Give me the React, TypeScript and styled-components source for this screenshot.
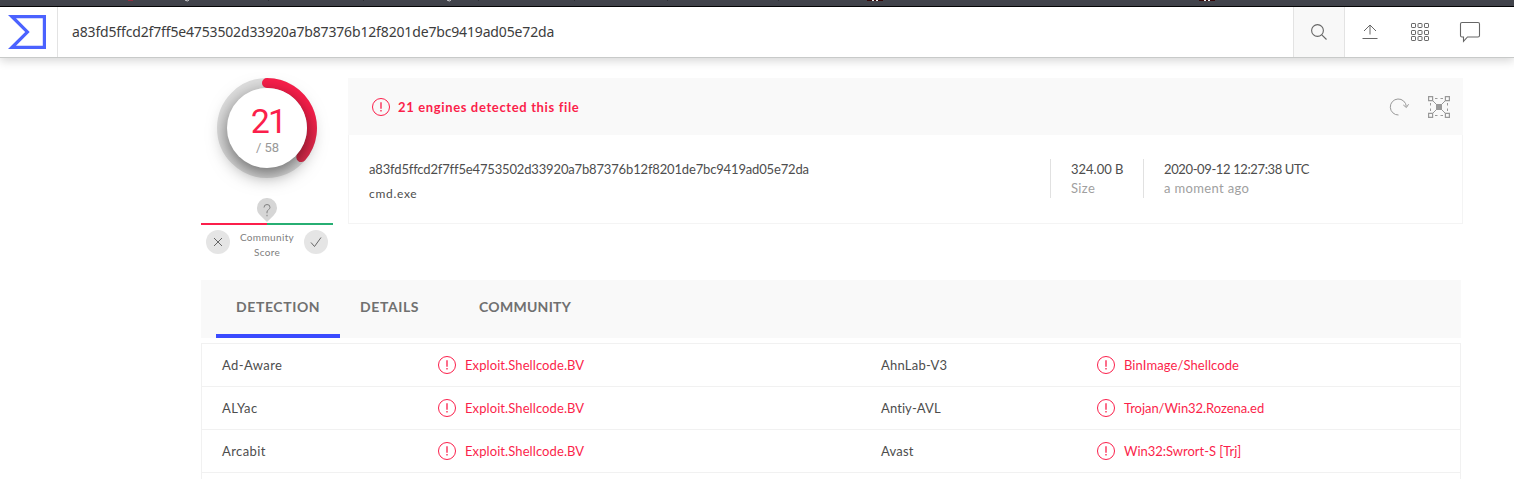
import React from "react";
import styled, { createGlobalStyle } from "styled-components";

const RED = "#fb1f4b";

const GlobalStyle = createGlobalStyle`
  * { box-sizing: border-box; }
  html, body { margin: 0; padding: 0; background: #fff; overflow: hidden; }
  body { font-family: Lato, "Open Sans", sans-serif; font-size: 13px; color: #4d4d4d; }
`;

const Page = styled.div`
  height: 479px;
  overflow: hidden;
  display: flex;
  flex-direction: column;
`;

const BrowserStrip = styled.div`
  height: 7px;
  flex: none;
  background: #42444c;
  border-bottom: 1px solid #050507;
  svg { display: block; }
`;

const Header = styled.header`
  height: 51px;
  flex: none;
  display: flex;
  background: #fff;
  border-bottom: 1px solid #c8cac9;
  box-shadow: 0 3px 9px rgba(0, 0, 0, 0.16);
`;

const LogoCell = styled.div`
  width: 58px;
  border-right: 1px solid #e3e3e3;
  padding: 8px 0 0 8px;
`;

const Query = styled.div`
  flex: 1;
  padding-left: 14px;
  font: 14px/50px "Noto Sans", sans-serif;
  letter-spacing: -0.155px;
  color: #3d3d3d;
`;

const HeaderButton = styled.div<{ $active?: boolean }>`
  width: ${(p) => (p.$active ? 52 : 50)}px;
  display: flex;
  align-items: center;
  justify-content: center;
  color: #666;
  ${(p) =>
    p.$active &&
    "background: #f8f8f8; border-left: 1px solid #e3e3e3; border-right: 1px solid #e3e3e3;"}
`;

const HeaderActions = styled.div`
  display: flex;
  width: 221px;
`;

const Main = styled.main`
  padding: 20px 51px 0 201px;
`;

const Summary = styled.section`
  display: flex;
  gap: 15px;
  height: 202px;
`;

const ScoreColumn = styled.div`
  width: 132px;
  display: flex;
  flex-direction: column;
  align-items: center;
`;

const Gauge = styled.div`
  width: 100px;
  height: 100px;
  padding: 10px;
  display: grid;
  border-radius: 50%;
  > * { grid-area: 1 / 1; }
  > svg { margin: -10px; }
`;

const GaugeDisc = styled.div`
  width: 80px;
  height: 80px;
  border-radius: 50%;
  background: #fff;
  box-shadow: 0 6px 19px rgba(0, 0, 0, 0.56);
  text-align: center;
  padding-top: 12px;
  font-family: Roboto, sans-serif;
`;

const Positives = styled.div`
  font-size: 34px;
  line-height: 43px;
  letter-spacing: -1.8px;
  padding-left: 2px;
  color: ${RED};
`;

const Total = styled.div`
  font-size: 13px;
  line-height: 10px;
  padding-left: 1px;
  color: #999;
`;

const Pin = styled.svg`
  display: block;
  margin-top: 20px;
`;

const ScoreLine = styled.div`
  width: 132px;
  height: 2px;
  background: linear-gradient(90deg, ${RED} 50%, #27ae73 50%);
`;

const Votes = styled.div`
  width: 132px;
  padding: 5px 5px 0;
  display: flex;
  justify-content: space-between;
`;

const VoteButton = styled.div`
  width: 24px;
  height: 24px;
  border-radius: 50%;
  background: #e5e5e5;
  svg { display: block; }
`;

const ScoreLabel = styled.div`
  font-size: 10px;
  line-height: 15px;
  letter-spacing: 0.35px;
  text-align: center;
  width: 60px;
  color: #808080;
`;

const Card = styled.div`
  width: 1115px;
  height: 146px;
  border: 1px solid #f4f4f4;
`;

const CardHeader = styled.div`
  margin: -1px -1px 0;
  height: 57px;
  padding: 0 13px 0 24px;
  display: flex;
  align-items: center;
  background: #f9f9f9;
  color: #999;
`;

const Verdict = styled.div`
  flex: 1;
  margin-left: 8px;
  font-size: 13px;
  font-weight: 700;
  letter-spacing: 0.64px;
  color: ${RED};
`;

const CardActions = styled.div`
  display: flex;
  gap: 19px;
  svg { display: block; }
`;

const CardBody = styled.div`
  display: flex;
  padding: 24px 20px 0;
  line-height: 19px;
`;

const FileInfo = styled.div`
  width: 681px;
  padding-top: 1px;
`;

const Hash = styled.div`
  letter-spacing: -0.155px;
`;

const FileName = styled.div`
  margin-top: 5px;
  font-size: 12px;
  letter-spacing: 0.7px;
`;

const Meta = styled.div<{ $width: number; $spacing: number }>`
  width: ${(p) => p.$width}px;
  height: 39px;
  padding: 1px 0 0 20px;
  border-left: 1px solid #e1e1e1;
  letter-spacing: ${(p) => p.$spacing}px;
  white-space: nowrap;
`;

const Muted = styled.div`
  color: #a0a0a0;
  letter-spacing: 0.35px;
`;

const Tabs = styled.nav`
  width: 1260px;
  height: 58px;
  padding-left: 15px;
  display: flex;
  background: #f9f9f9;
`;

const Tab = styled.div<{ $width: number; $spacing?: number; $active?: boolean }>`
  width: ${(p) => p.$width}px;
  padding: 0 20px;
  font-size: 14px;
  font-weight: 700;
  line-height: 54px;
  letter-spacing: ${(p) => p.$spacing ?? 0.6}px;
  color: #707070;
  border-bottom: 4px solid ${(p) => (p.$active ? "#3b4bff" : "transparent")};
`;

const Results = styled.div`
  width: 1260px;
  margin-top: 5px;
  border: 1px solid #f1f1f1;
`;

const ResultRow = styled.div`
  height: 43px;
  padding-left: 20px;
  display: grid;
  grid-template-columns: 216px 443px 216px 1fr;
  align-items: center;
  border-bottom: 1px solid #f1f1f1;
`;

const Engine = styled.div<{ $spacing: number }>`
  letter-spacing: ${(p) => p.$spacing}px;
`;

const Finding = styled.div<{ $spacing: number }>`
  display: flex;
  align-items: center;
  gap: 9px;
  color: ${RED};
  letter-spacing: ${(p) => p.$spacing}px;
`;

const AlertIcon = () => (
  <svg width="18" height="18" viewBox="0 0 18 18" fill="none" stroke={RED}>
    <circle cx="9" cy="9" r="8.5" />
    <path d="M9 4.2v6.6M9 12v1.500" strokeWidth="1.300" />
  </svg>
);

const HASH = "a83fd5ffcd2f7ff5e4753502d33920a7b87376b12f8201de7bc9419ad05e72da";

type Cell = { name: string; ns: number; result: string; rs: number };
const ROWS: [Cell, Cell][] = [
  [
    { name: "Ad-Aware", ns: 0.4, result: "Exploit.Shellcode.BV", rs: 0.09 },
    { name: "AhnLab-V3", ns: 0.22, result: "BinImage/Shellcode", rs: 0.09 },
  ],
  [
    { name: "ALYac", ns: 0.4, result: "Exploit.Shellcode.BV", rs: 0.09 },
    { name: "Antiy-AVL", ns: 0.1, result: "Trojan/Win32.Rozena.ed", rs: -0.05 },
  ],
  [
    { name: "Arcabit", ns: 0.4, result: "Exploit.Shellcode.BV", rs: 0.09 },
    { name: "Avast", ns: 0.2, result: "Win32:Swrort-S [Trj]", rs: -0.02 },
  ],
];

export default function App() {
  return (
    <Page>
      <GlobalStyle />
      <BrowserStrip>
        <svg width="1514" height="6">
          <path d="M128 0h5v.7h-5z" fill="#b3243c" />
          <path d="M185 0q2.500 2 4 0M447 0q2.500 2 4 0" fill="none" stroke="#d5d5d8" />
          <path d="M268 0h1v1h-1zM363 0h1v1h-1zM478 0h1v1h-1zM574 0h1v1h-1zM667 0h1v1h-1zM778 0h1v1h-1z" fill="#2c2e34" />
          <path d="M867 0h16v1h-16zM1199 0h16v1h-16z" fill="#350708" />
          <path d="M872 0h2v1h-2zM876 0h2v1h-2zM1204 0h2v1h-2zM1208 0h2v1h-2z" fill="#eee" />
        </svg>
      </BrowserStrip>
      <Header>
        <LogoCell>
          <svg width="38" height="34" viewBox="0 0 38 34">
            <path d="M0 0H38V34H0L17.200 17ZM8 3.200L21.700 17L8 30.800H34.800V3.200Z" fill="#4b62ff" fillRule="evenodd" />
          </svg>
        </LogoCell>
        <Query>{HASH}</Query>
        <HeaderActions>
          <HeaderButton $active>
            <svg width="18" height="18" viewBox="0 0 18 18" fill="none" stroke="currentColor" strokeWidth="1.100">
              <circle cx="7.500" cy="7.500" r="5.900" />
              <path d="M11.800 11.800L16.500 16.500" />
            </svg>
          </HeaderButton>
          <HeaderButton>
            <svg width="18" height="18" viewBox="0 0 18 18" fill="none" stroke="currentColor">
              <path d="M9 11.500V2.300M3 8L9 2L15 8M1.500 15.500H16.500" />
            </svg>
          </HeaderButton>
          <HeaderButton>
            <svg width="20" height="20" viewBox="0 0 20 20" fill="none" stroke="currentColor">
              {[1.5, 8.5, 14.5].map((y) =>
                [1.5, 8, 14.5].map((x) => (
                  <rect key={`${x}-${y}`} x={x} y={y} width="4" height="4" rx="0.600" />
                ))
              )}
            </svg>
          </HeaderButton>
          <HeaderButton>
            <svg width="22" height="22" viewBox="0 0 22 22" fill="none" stroke="currentColor" strokeWidth="1.100">
              <path d="M3 1.500H19Q20.500 1.500 20.500 3V14.500Q20.500 16 19 16H8.500L4.500 20.300V16H3Q1.500 16 1.500 14.500V3Q1.500 1.500 3 1.500Z" />
            </svg>
          </HeaderButton>
        </HeaderActions>
      </Header>

      <Main>
        <Summary>
          <ScoreColumn>
            <Gauge>
              <svg width="100" height="100" viewBox="0 0 100 100" fill="none" strokeWidth="10">
                <defs>
                  <linearGradient id="arc" gradientUnits="userSpaceOnUse" x1="0" y1="0" x2="0" y2="85">
                    <stop offset="0.4" stopColor={RED} />
                    <stop offset="1" stopColor="#e2304f" />
                  </linearGradient>
                </defs>
                <circle cx="50" cy="50" r="45" stroke="#e0e0e0" />
                <path d="M50 5A45 45 0 0 1 84.300 79.100" stroke="url(#arc)" strokeLinecap="round" />
              </svg>
              <GaugeDisc>
                <Positives>21</Positives>
                <Total>/ 58</Total>
              </GaugeDisc>
            </Gauge>
            <Pin width="20" height="25" viewBox="0 0 20 25">
              <path d="M10 24L3.400 17.500A10 10 0 1 1 16.600 17.500Z" fill="#d6d6d6" />
              <path d="M7 9.500Q7 6.500 10 6.500T13 9.300Q13 10.800 11.400 11.800Q10 12.700 10 14V15.300M10 16.800V18.300" fill="none" stroke="#808080" />
            </Pin>
            <ScoreLine />
            <Votes>
              <VoteButton>
                <svg width="24" height="24" viewBox="0 0 24 24" fill="none" stroke="#666">
                  <path d="M8 8L16 16M16 8L8 16" />
                </svg>
              </VoteButton>
              <ScoreLabel>Community Score</ScoreLabel>
              <VoteButton>
                <svg width="24" height="24" viewBox="0 0 24 24" fill="none" stroke="#666">
                  <path d="M7 12.500L10.500 16.500L17 7.500" />
                </svg>
              </VoteButton>
            </Votes>
          </ScoreColumn>

          <Card>
            <CardHeader>
              <AlertIcon />
              <Verdict>21 engines detected this file</Verdict>
              <CardActions>
                <svg width="20" height="22" viewBox="0 0 20 22" fill="none" stroke="currentColor">
                  <path d="M9.500 19A8 8 0 1 1 17.300 10.500M14.300 9L17.400 11.500L19.600 8.200" />
                </svg>
                <svg width="22" height="22" viewBox="0 0 22 22" fill="none" stroke="currentColor">
                  <path d="M.6 .6h4v4h-4zM17.400 .6h4v4h-4zM.6 17.400h4v4h-4zM17.400 17.400h4v4h-4z" strokeWidth="1.200" />
                  <path d="M4.500 4.500L17.500 17.500M17.500 4.500L4.500 17.500" />
                  <path d="M7 2.500H9.500M12.500 2.500H15M7 19.500H9.500M12.500 19.500H15M2.500 7V9.500M2.500 12.500V15M19.500 7V9.500M19.500 12.500V15" />
                  <rect x="8" y="8" width="6" height="6" fill="currentColor" stroke="none" />
                </svg>
              </CardActions>
            </CardHeader>
            <CardBody>
              <FileInfo>
                <Hash>{HASH}</Hash>
                <FileName>cmd.exe</FileName>
              </FileInfo>
              <Meta $width={93} $spacing={0}>
                <div>324.00 B</div>
                <Muted>Size</Muted>
              </Meta>
              <Meta $width={220} $spacing={-0.38}>
                <div>2020-09-12 12:27:38 UTC</div>
                <Muted>a moment ago</Muted>
              </Meta>
            </CardBody>
          </Card>
        </Summary>

        <Tabs>
          <Tab $width={124} $active>DETECTION</Tab>
          <Tab $width={119}>DETAILS</Tab>
          <Tab $width={140} $spacing={0.28}>COMMUNITY</Tab>
        </Tabs>

        <Results>
          {ROWS.map(([a, b]) => (
            <ResultRow key={a.name}>
              <Engine $spacing={a.ns}>{a.name}</Engine>
              <Finding $spacing={a.rs}><AlertIcon />{a.result}</Finding>
              <Engine $spacing={b.ns}>{b.name}</Engine>
              <Finding $spacing={b.rs}><AlertIcon />{b.result}</Finding>
            </ResultRow>
          ))}
          <ResultRow />
        </Results>
      </Main>
    </Page>
  );
}
